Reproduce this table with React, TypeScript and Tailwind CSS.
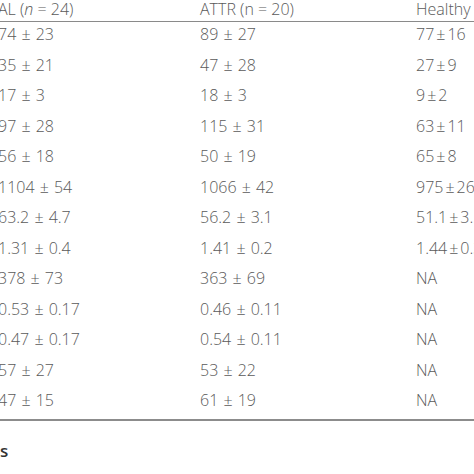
const rows: [string, string, string][] = [
  ["74 ± 23", "89 ± 27", "77 ± 16"],
  ["35 ± 21", "47 ± 28", "27 ± 9"],
  ["17 ± 3", "18 ± 3", "9 ± 2"],
  ["97 ± 28", "115 ± 31", "63 ± 11"],
  ["56 ± 18", "50 ± 19", "65 ± 8"],
  ["1104 ± 54", "1066 ± 42", "975 ± 26"],
  ["63.2 ± 4.7", "56.2 ± 3.1", "51.1 ± 3.5"],
  ["1.31 ± 0.4", "1.41 ± 0.2", "1.44 ± 0.3"],
  ["378 ± 73", "363 ± 69", "NA"],
  ["0.53 ± 0.17", "0.46 ± 0.11", "NA"],
  ["0.47 ± 0.17", "0.54 ± 0.11", "NA"],
  ["57 ± 27", "53 ± 22", "NA"],
  ["47 ± 15", "61 ± 19", "NA"],
];

// mean ± sd; the healthy column is set tighter round the ±
function Value({ value, tight }: { value: string; tight?: boolean }) {
  const parts = value.split(" ± ");
  if (parts.length < 2) return <>{value}</>;
  if (tight) {
    return (
      <>
        {parts[0]}
        <span className="mx-[2px]">±</span>
        {parts[1]}
      </>
    );
  }
  return (
    <>
      {parts[0]} <span className="mx-[1px]">±</span> {parts[1]}
    </>
  );
}

export default function App() {
  return (
    <div
      className="w-[474px] h-[474px] overflow-hidden bg-white text-[#5a5a5a] text-[16px] font-light"
      style={{ fontFamily: '"Open Sans", "Liberation Sans", sans-serif' }}
    >
      <div className="-ml-[2px] w-[476px]">
        {/* Kopfzeile */}
        <div className="grid grid-cols-[202px_216px_1fr] h-[22px] leading-[18px] border-b-[1.5px] border-[#8a8a8a] whitespace-nowrap">
          <div>
            AL (<i>n</i> = 24)
          </div>
          <div>ATTR (n = 20)</div>
          <div className="overflow-hidden">Healthy</div>
        </div>

        {/* Werte */}
        {rows.map((r, idx) => (
          <div
            key={idx}
            className="grid grid-cols-[202px_216px_1fr] h-[30.5px] last:h-[26px] pt-[2px] leading-[20px] whitespace-nowrap"
          >
            <div>
              <Value value={r[0]} />
            </div>
            <div>
              <Value value={r[1]} />
            </div>
            <div className="overflow-hidden">
              <Value value={r[2]} tight />
            </div>
          </div>
        ))}

        <div className="border-t-2 border-[#8c8c8c]" />
      </div>

      <div className="mt-[20px] text-[17px] font-semibold leading-[20px] text-[#333]">s</div>
    </div>
  );
}
